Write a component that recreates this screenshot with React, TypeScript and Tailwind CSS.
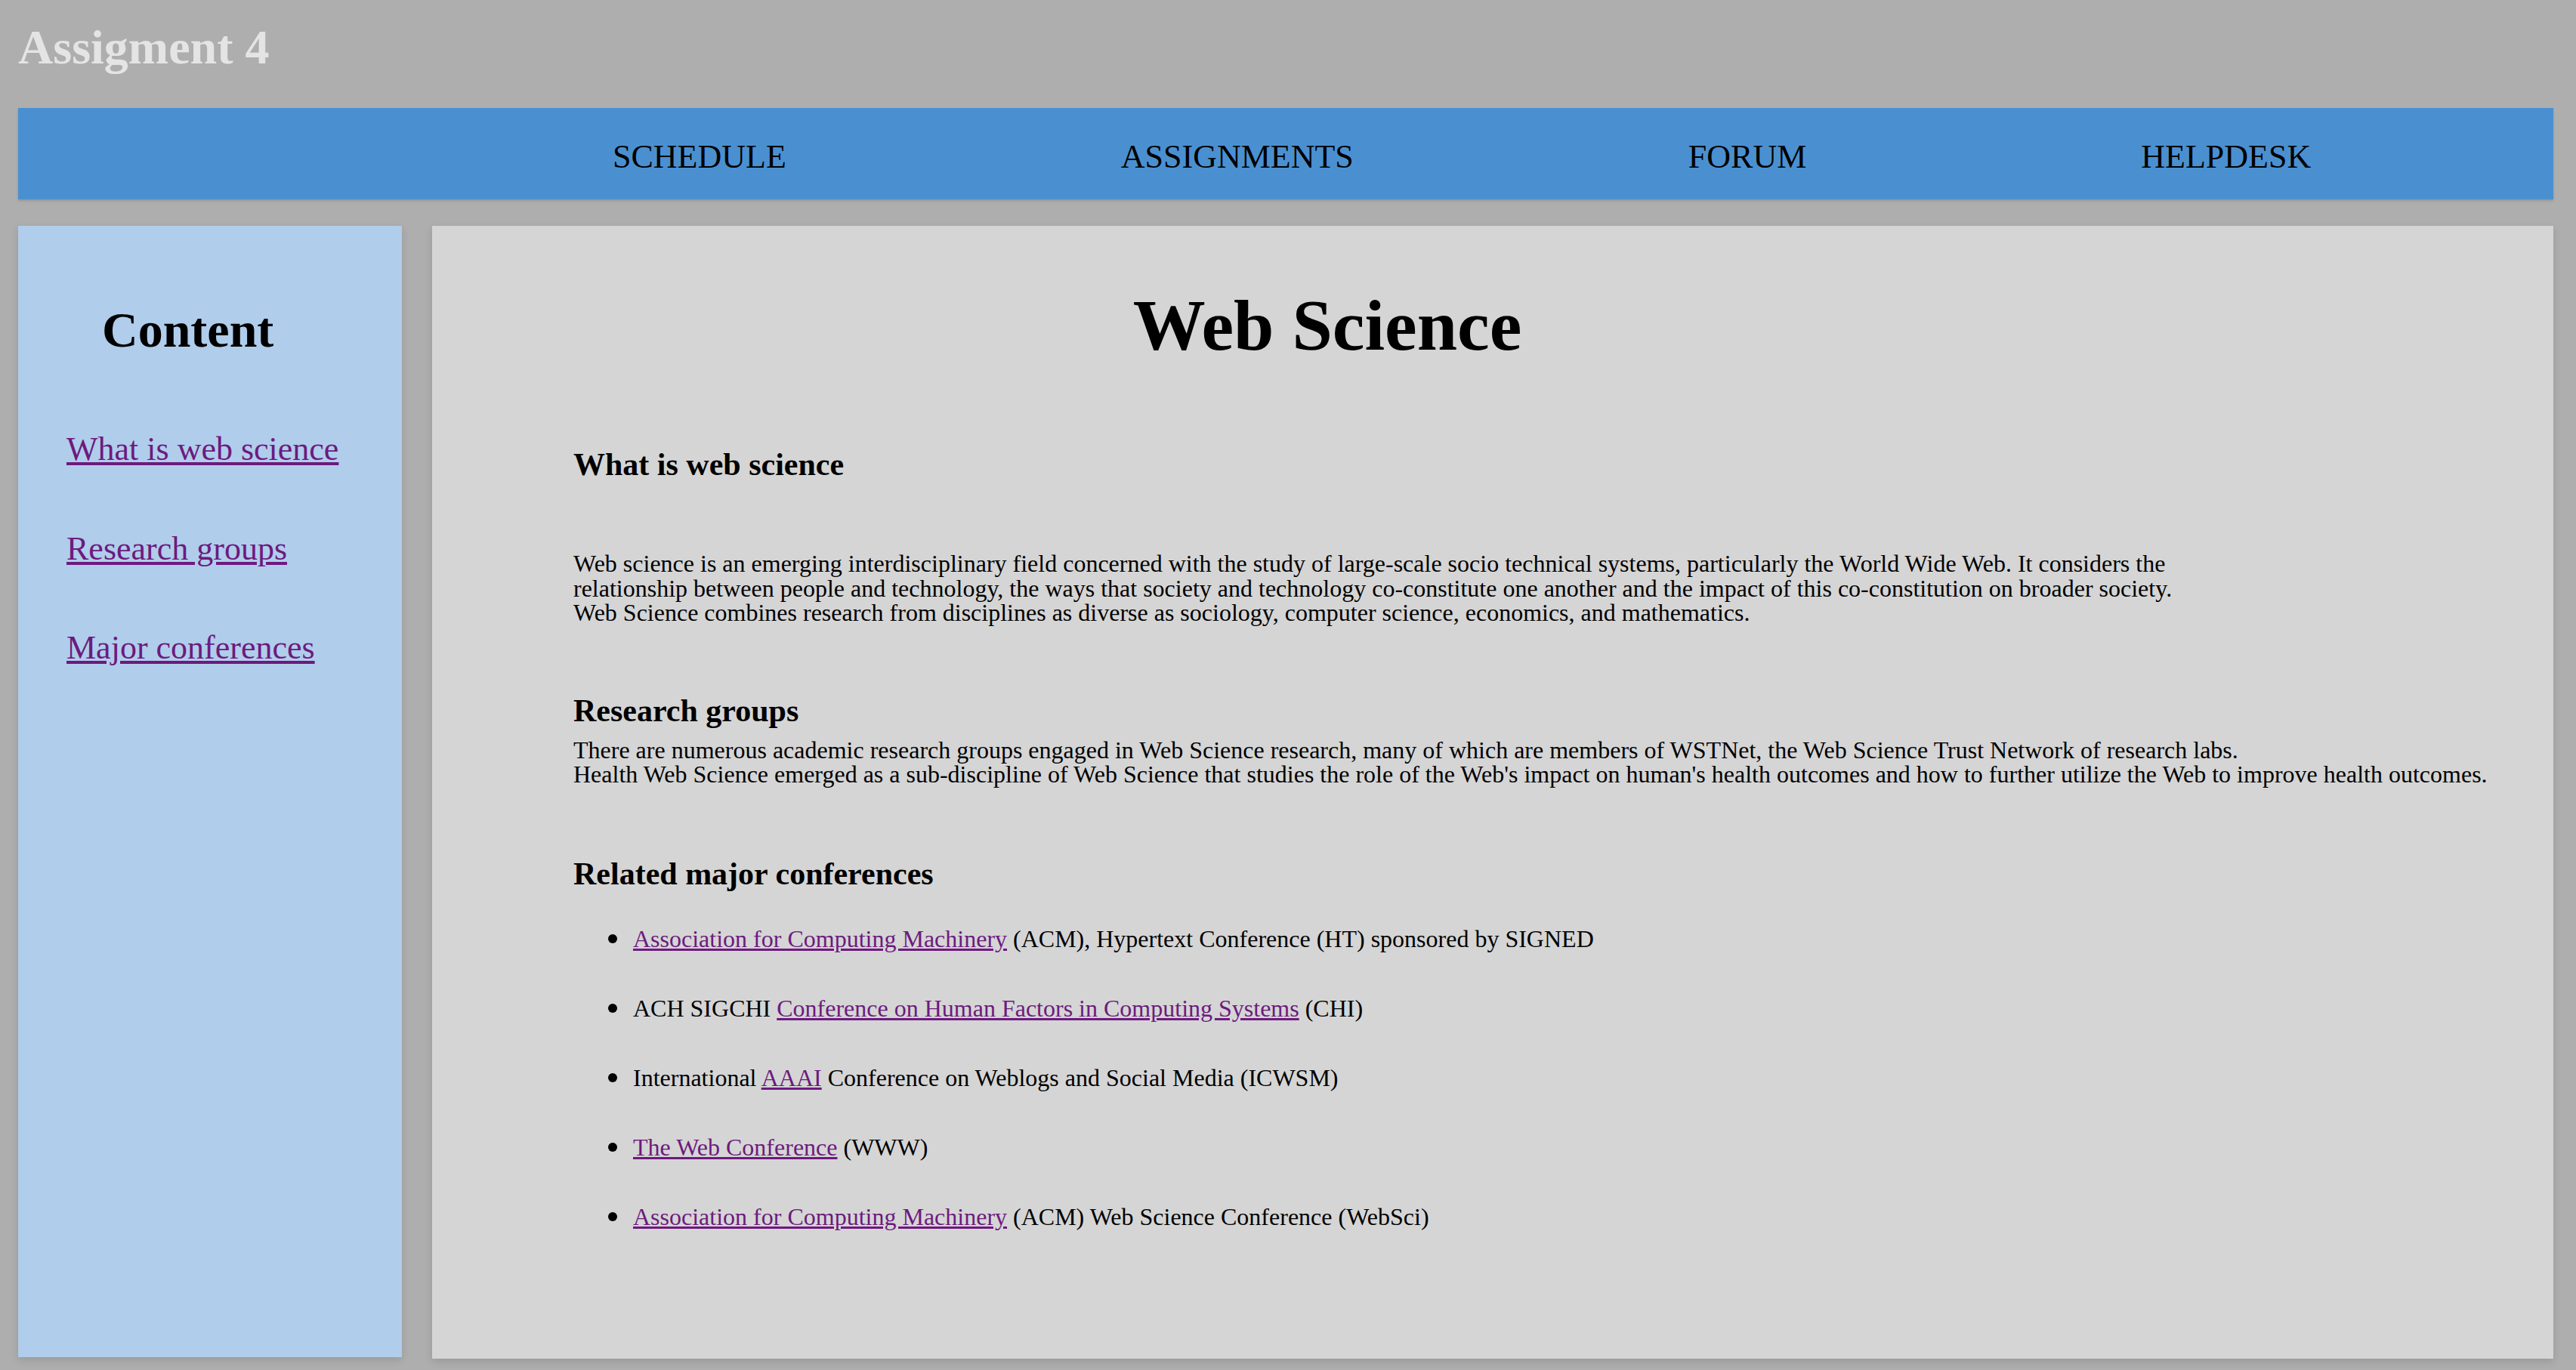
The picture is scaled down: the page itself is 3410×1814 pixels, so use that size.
import React from "react";

// sidebar links
const sideLinks = ["What is web science", "Research groups", "Major conferences"];

const navItems = ["SCHEDULE", "ASSIGNMENTS", "FORUM", "HELPDESK"];

function Bullet() {
  return <span className="inline-block w-[12px] h-[12px] rounded-full bg-black shrink-0" />;
}

function A({ children }: { children: React.ReactNode }) {
  return (
    <a href="#" className="text-[#6d1a7e] underline">
      {children}
    </a>
  );
}

export default function App() {
  const conferences: React.ReactNode[] = [
    <>
      <A>Association for Computing Machinery</A> (ACM), Hypertext Conference (HT) sponsored by SIGNED
    </>,
    <>
      ACH SIGCHI <A>Conference on Human Factors in Computing Systems</A> (CHI)
    </>,
    <>
      International <A>AAAI</A> Conference on Weblogs and Social Media (ICWSM)
    </>,
    <>
      <A>The Web Conference</A> (WWW)
    </>,
    <>
      <A>Association for Computing Machinery</A> (ACM) Web Science Conference (WebSci)
    </>,
  ];

  return (
    <div className="min-h-screen w-full bg-[#aeaeae] pl-[24px] pr-[30px] font-['Liberation_Serif',serif] text-black">
      {/* Title */}
      <div className="pt-[31px] pb-[48px]">
        <h1 className="text-[64px] leading-[64px] font-bold text-[#e4e4e4]">Assigment 4</h1>
      </div>

      {/* Nav */}
      <nav className="h-[121px] bg-[#4a90d1] flex items-center pl-[787px] pt-[8px] gap-[443px] shadow-[0_2px_3px_rgba(0,0,0,0.15)]">
        {navItems.map((n) => (
          <span key={n} className="text-[44px] leading-[44px] whitespace-nowrap">
            {n}
          </span>
        ))}
      </nav>

      <div className="flex gap-[40px] mt-[35px]">
        {/* Sidebar */}
        <aside className="w-[508px] h-[1498px] shrink-0 bg-[#b0cdeb] pt-[105px] shadow-[0_4px_10px_rgba(0,0,0,0.12)]">
          <h2 className="pl-[111px] text-[66px] leading-[66px] font-bold">Content</h2>
          <div className="flex flex-col gap-[87.5px] pl-[64px] mt-[103px]">
            {sideLinks.map((l) => (
              <a key={l} href="#" className="text-[44px] leading-[44px] text-[#6d1a7e] underline whitespace-nowrap">
                {l}
              </a>
            ))}
          </div>
        </aside>

        {/* Main */}
        <main className="flex-1 h-[1500px] bg-[#d5d5d5] pl-[187px] pt-[84px] shadow-[0_4px_10px_rgba(0,0,0,0.12)]">
          <h1 className="w-[1996px] text-center text-[96px] leading-[96px] font-bold">Web Science</h1>

          <h2 className="mt-[115px] text-[42px] leading-[42px] font-bold">What is web science</h2>
          <p className="mt-[94px] text-[32px] leading-[32.5px] whitespace-nowrap">
            Web science is an emerging interdisciplinary field concerned with the study of large-scale socio technical systems, particularly the World Wide Web. It considers the
            <br />
            relationship between people and technology, the ways that society and technology co-constitute one another and the impact of this co-constitution on broader society.
            <br />
            Web Science combines research from disciplines as diverse as sociology, computer science, economics, and mathematics.
          </p>

          <h2 className="mt-[92px] text-[42px] leading-[42px] font-bold">Research groups</h2>
          <p className="mt-[15px] text-[32px] leading-[32.5px] whitespace-nowrap">
            There are numerous academic research groups engaged in Web Science research, many of which are members of WSTNet, the Web Science Trust Network of research labs.
            <br />
            Health Web Science emerged as a sub-discipline of Web Science that studies the role of the Web's impact on human's health outcomes and how to further utilize the Web to improve health outcomes.
          </p>

          <h2 className="mt-[94px] text-[42px] leading-[42px] font-bold">Related major conferences</h2>
          <ul className="mt-[49px] flex flex-col gap-[59.6px]">
            {conferences.map((c, i) => (
              <li key={i} className="flex items-center pl-[46px] gap-[21px] text-[32px] leading-[32.5px] whitespace-nowrap">
                <Bullet />
                <span>{c}</span>
              </li>
            ))}
          </ul>
        </main>
      </div>
    </div>
  );
}
